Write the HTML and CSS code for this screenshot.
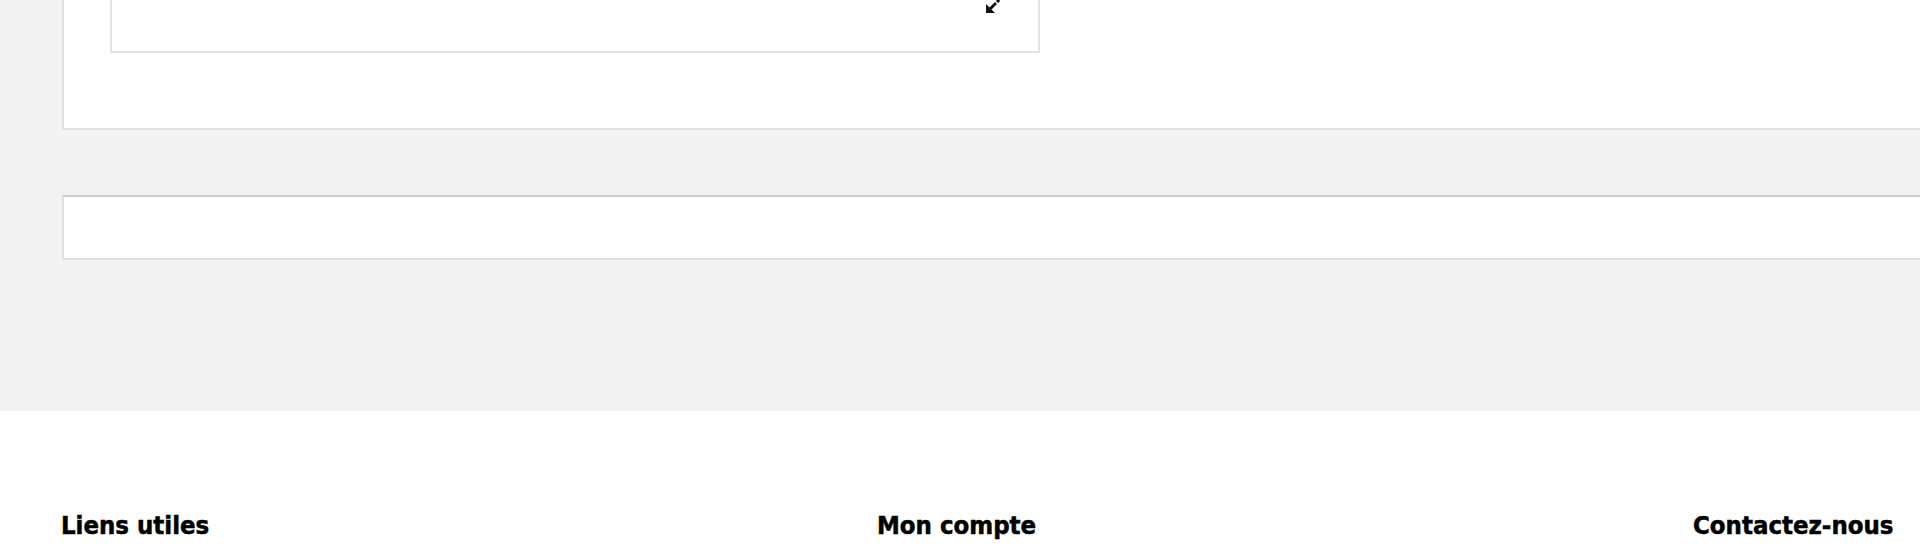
FILE: index.html
```html
<!DOCTYPE html>
<html lang="fr">
<head>
<meta charset="utf-8">
<title>Page</title>
<link rel="stylesheet" href="styles.css">
</head>
<body>
<main class="main">
  <section class="card card-top">
    <div class="editor">
      <svg class="resize-icon" width="30" height="30" viewBox="0 0 30 30" aria-hidden="true">
        <polygon points="2,29 2,20 11,29" fill="#111"/>
        <line x1="4" y1="27" x2="12" y2="19" stroke="#111" stroke-width="3"/>
        <line x1="13" y1="18" x2="28" y2="3" stroke="#111" stroke-width="3" stroke-dasharray="3 2"/>
      </svg>
    </div>
  </section>
  <section class="card card-bottom"></section>
</main>
<footer class="footer">
  <div class="footer-cols">
    <div class="footer-col"><h3 class="footer-title">Liens utiles</h3></div>
    <div class="footer-col"><h3 class="footer-title">Mon compte</h3></div>
    <div class="footer-col"><h3 class="footer-title">Contactez-nous</h3></div>
  </div>
</footer>
</body>
</html>
```
FILE: styles.css
```css
html {
  overflow: hidden;
}
body {
  margin: 0;
  background: #ffffff;
  font-family: "DejaVu Sans Condensed", "DejaVu Sans", Verdana, sans-serif;
}
.main {
  background: #f3f3f3;
  padding: 0 0 151px 62px;
  display: flex;
  flex-direction: column;
  gap: 65px;
}
.card {
  box-sizing: border-box;
  width: 2448px;
  background: #ffffff;
  border: 2px solid #e0e0e0;
}
.card-top {
  margin-top: -150px;
  padding: 48px 46px 75px;
}
.editor {
  position: relative;
  box-sizing: border-box;
  width: 930px;
  height: 153px;
  border: 2px solid #e3e3e3;
  background: #ffffff;
}
.resize-icon {
  position: absolute;
  right: 24px;
  bottom: 37px;
  display: block;
}
.card-bottom {
  height: 65px;
  border-top-color: #cbcbcb;
}
.footer {
  padding: 99px 0 0 61px;
}
.footer-cols {
  display: grid;
  grid-template-columns: repeat(3, 816px);
}
.footer-title {
  margin: 0;
  font-size: 25.5px;
  line-height: 30px;
  font-weight: 700;
  font-stretch: condensed;
  color: #000000;
  -webkit-text-stroke: 0.5px #000000;
}
```
